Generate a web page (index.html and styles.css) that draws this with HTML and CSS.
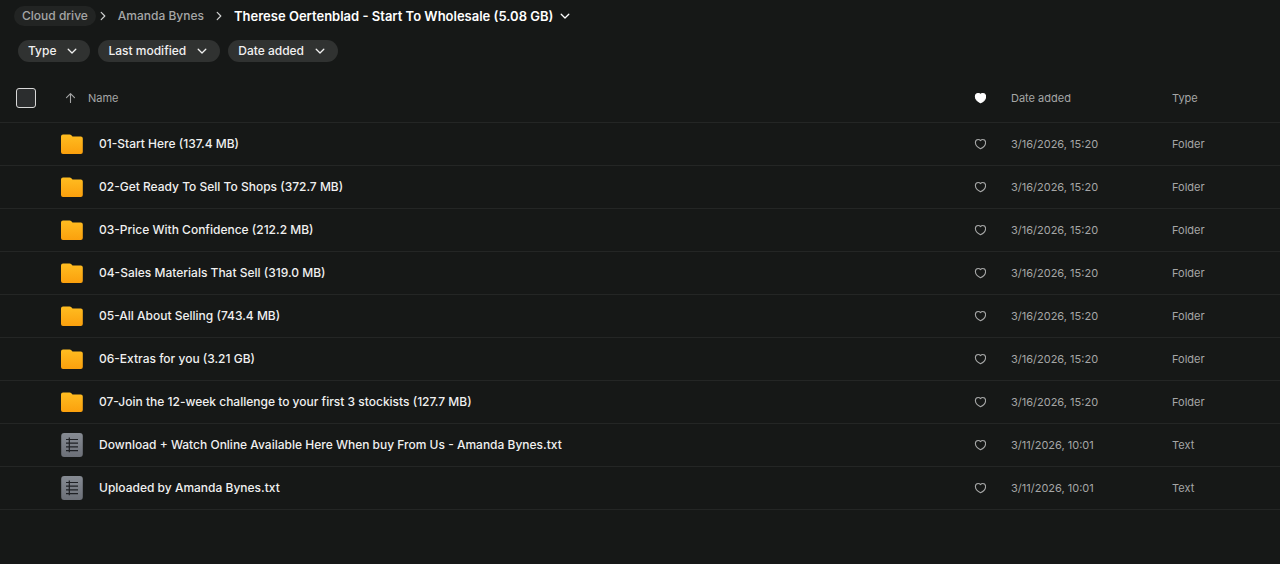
FILE: index.html
```html
<!DOCTYPE html>
<html lang="en">
<head>
    <meta charset="UTF-8">
    <meta name="viewport" content="width=device-width, initial-scale=1.0">
    <title>Cloud drive</title>
    <link rel="stylesheet" href="styles.css">
</head>
<body>
    <svg class="sprite" aria-hidden="true">
        <defs>
            <linearGradient id="folder-fill" x1="0" y1="0" x2="0" y2="1">
                <stop offset="0" stop-color="#ffbd21"/>
                <stop offset="1" stop-color="#fba00d"/>
            </linearGradient>
            <linearGradient id="text-fill" x1="0" y1="0" x2="0" y2="1">
                <stop offset="0" stop-color="#868b93"/>
                <stop offset="1" stop-color="#6c7078"/>
            </linearGradient>
            <symbol id="chevron-down" viewBox="0 0 12 12">
                <path d="M2.2 4.2l3.8 3.8 3.8-3.8" fill="none" stroke="currentColor" stroke-width="1.3" stroke-linecap="round" stroke-linejoin="round"/>
            </symbol>
            <symbol id="chevron-right" viewBox="0 0 12 12">
                <path d="M4.2 2.4l3.6 3.6-3.6 3.6" fill="none" stroke="currentColor" stroke-width="1.2" stroke-linecap="round" stroke-linejoin="round"/>
            </symbol>
            <symbol id="arrow-up" viewBox="0 0 12 12">
                <path d="M6.5 10.5V2M2.5 5.7l4-4 4 4" fill="none" stroke="currentColor" stroke-width="1.1" stroke-linecap="round" stroke-linejoin="round"/>
            </symbol>
            <symbol id="heart" viewBox="0 0 12 12">
                <path d="M6.5 10.8C4.6 9.9 1.4 7.7 1.4 4.6 1.4 2.8 2.5 1.5 4.1 1.5 5.1 1.5 6 1.9 6.5 2.6 7 1.9 7.9 1.5 8.9 1.5 10.5 1.5 11.6 2.8 11.6 4.6 11.6 7.7 8.4 9.9 6.5 10.8Z" stroke="currentColor" stroke-width="1.1" stroke-linejoin="round"/>
            </symbol>
            <symbol id="folder" viewBox="0 0 24 24">
                <path d="M1 4.5A2 2 0 0 1 3 2.5H9.6A2.4 2.4 0 0 1 11.4 3.3L12.2 4.2A1.5 1.5 0 0 0 13.3 4.6H20.8A2 2 0 0 1 22.8 6.6V20A2 2 0 0 1 20.8 22H3A2 2 0 0 1 1 20Z" fill="url(#folder-fill)"/>
            </symbol>
            <symbol id="text-file" viewBox="0 0 24 24">
                <rect x="1.2" y="0" width="21.6" height="24" rx="3" fill="url(#text-fill)"/>
                <path d="M6 6.5H18M6 10.2H18M6 13.9H18M6 17.6H18M9.3 4.6V19.2" fill="none" stroke="#1e2024" stroke-width="1.2"/>
            </symbol>
        </defs>
    </svg>

    <nav class="breadcrumb" aria-label="Breadcrumb">
        <a class="crumb crumb-root" href="#">Cloud drive</a>
        <svg class="icon crumb-sep"><use href="#chevron-right"/></svg>
        <a class="crumb" href="#">Amanda Bynes</a>
        <svg class="icon crumb-sep"><use href="#chevron-right"/></svg>
        <button class="crumb-current" type="button">Therese Oertenblad - Start To Wholesale (5.08 GB)<svg class="icon"><use href="#chevron-down"/></svg></button>
    </nav>

    <div class="filters">
        <button class="filter" type="button">Type<svg class="icon"><use href="#chevron-down"/></svg></button>
        <button class="filter" type="button">Last modified<svg class="icon"><use href="#chevron-down"/></svg></button>
        <button class="filter" type="button">Date added<svg class="icon"><use href="#chevron-down"/></svg></button>
    </div>

    <table class="files">
        <colgroup>
            <col class="col-check">
            <col class="col-name">
            <col class="col-fav">
            <col class="col-date">
            <col class="col-type">
        </colgroup>
        <thead>
            <tr>
                <th><input class="check" type="checkbox" aria-label="Select all"></th>
                <th><button class="sort" type="button"><svg class="icon"><use href="#arrow-up"/></svg>Name</button></th>
                <th><svg class="icon heart heart-on" role="img" aria-label="Favourite"><use href="#heart"/></svg></th>
                <th>Date added</th>
                <th>Type</th>
            </tr>
        </thead>
        <tbody>
            <tr>
                <td></td>
                <td><div class="name"><svg class="file-icon"><use href="#folder"/></svg>01-Start Here (137.4 MB)</div></td>
                <td><button class="fav" type="button" aria-label="Add to favourites"><svg class="icon heart"><use href="#heart"/></svg></button></td>
                <td>3/16/2026, 15:20</td>
                <td>Folder</td>
            </tr>
            <tr>
                <td></td>
                <td><div class="name"><svg class="file-icon"><use href="#folder"/></svg>02-Get Ready To Sell To Shops (372.7 MB)</div></td>
                <td><button class="fav" type="button" aria-label="Add to favourites"><svg class="icon heart"><use href="#heart"/></svg></button></td>
                <td>3/16/2026, 15:20</td>
                <td>Folder</td>
            </tr>
            <tr>
                <td></td>
                <td><div class="name"><svg class="file-icon"><use href="#folder"/></svg>03-Price With Confidence (212.2 MB)</div></td>
                <td><button class="fav" type="button" aria-label="Add to favourites"><svg class="icon heart"><use href="#heart"/></svg></button></td>
                <td>3/16/2026, 15:20</td>
                <td>Folder</td>
            </tr>
            <tr>
                <td></td>
                <td><div class="name"><svg class="file-icon"><use href="#folder"/></svg>04-Sales Materials That Sell (319.0 MB)</div></td>
                <td><button class="fav" type="button" aria-label="Add to favourites"><svg class="icon heart"><use href="#heart"/></svg></button></td>
                <td>3/16/2026, 15:20</td>
                <td>Folder</td>
            </tr>
            <tr>
                <td></td>
                <td><div class="name"><svg class="file-icon"><use href="#folder"/></svg>05-All About Selling (743.4 MB)</div></td>
                <td><button class="fav" type="button" aria-label="Add to favourites"><svg class="icon heart"><use href="#heart"/></svg></button></td>
                <td>3/16/2026, 15:20</td>
                <td>Folder</td>
            </tr>
            <tr>
                <td></td>
                <td><div class="name"><svg class="file-icon"><use href="#folder"/></svg>06-Extras for you (3.21 GB)</div></td>
                <td><button class="fav" type="button" aria-label="Add to favourites"><svg class="icon heart"><use href="#heart"/></svg></button></td>
                <td>3/16/2026, 15:20</td>
                <td>Folder</td>
            </tr>
            <tr>
                <td></td>
                <td><div class="name"><svg class="file-icon"><use href="#folder"/></svg>07-Join the 12-week challenge to your first 3 stockists (127.7 MB)</div></td>
                <td><button class="fav" type="button" aria-label="Add to favourites"><svg class="icon heart"><use href="#heart"/></svg></button></td>
                <td>3/16/2026, 15:20</td>
                <td>Folder</td>
            </tr>
            <tr>
                <td></td>
                <td><div class="name"><svg class="file-icon"><use href="#text-file"/></svg>Download + Watch Online Available Here When buy From Us - Amanda Bynes.txt</div></td>
                <td><button class="fav" type="button" aria-label="Add to favourites"><svg class="icon heart"><use href="#heart"/></svg></button></td>
                <td>3/11/2026, 10:01</td>
                <td>Text</td>
            </tr>
            <tr>
                <td></td>
                <td><div class="name"><svg class="file-icon"><use href="#text-file"/></svg>Uploaded by Amanda Bynes.txt</div></td>
                <td><button class="fav" type="button" aria-label="Add to favourites"><svg class="icon heart"><use href="#heart"/></svg></button></td>
                <td>3/11/2026, 10:01</td>
                <td>Text</td>
            </tr>
        </tbody>
    </table>
</body>
</html>
```
FILE: styles.css
```css
* {
    margin: 0;
    padding: 0;
    box-sizing: border-box;
}
body {
    min-height: 100vh;
    background: #161817;
    color: #f0f0f0;
    font: 500 12px/20px Inter, "Liberation Sans", sans-serif;
}
button {
    border: 0;
    background: none;
    color: inherit;
    font: inherit;
    cursor: pointer;
}
.sprite {
    display: block;
    width: 0;
    height: 0;
}
.icon {
    flex: none;
    display: block;
    width: 12px;
    height: 12px;
    overflow: visible;
}

/* breadcrumb */
.breadcrumb {
    display: flex;
    align-items: center;
    padding: 6px 14px 0;
}
.crumb {
    padding: 0 8px;
    border-radius: 10px;
    color: #a5a6a6;
    text-decoration: none;
}
.crumb-root {
    background: #222423;
}
.crumb-sep {
    margin: 0 1px;
    color: #d0d1d1;
}
.crumb-current {
    display: flex;
    align-items: center;
    gap: 6px;
    padding: 0 8px;
    color: #fff;
    font-size: 13px;
    font-weight: 600;
}

/* filters */
.filters {
    display: flex;
    gap: 8px;
    padding: 14px 18px 12px;
}
.filter {
    display: flex;
    align-items: center;
    gap: 10px;
    height: 22px;
    padding: 0 12px 0 10px;
    border-radius: 11px;
    background: #303231;
}

/* file list */
.files {
    width: 100%;
    table-layout: fixed;
    border-collapse: separate;
    border-spacing: 0;
    color: #a5a6a6;
    font-size: 11px;
}
.col-check {
    width: 60px;
}
.col-fav {
    width: 37px;
}
.col-date {
    width: 161px;
}
.col-type {
    width: 108px;
}
.files th,
.files td {
    height: 43px;
    border-bottom: 1px solid #242625;
    font-weight: 400;
    text-align: left;
    vertical-align: middle;
    white-space: nowrap;
}
.files th {
    height: 49px;
}
.check {
    display: block;
    width: 20px;
    height: 20px;
    margin-left: 16px;
    appearance: none;
    border: 1px solid #d8d8d8;
    border-radius: 3px;
    background: #2b2d2e;
}
.check:checked {
    background: #f0f0f0;
}
.sort {
    display: flex;
    align-items: center;
    gap: 12px;
    padding-left: 4px;
}
.name {
    display: flex;
    align-items: center;
    gap: 15px;
    color: #f0f0f0;
    font-size: 12px;
    font-weight: 500;
}
.file-icon {
    flex: none;
    width: 24px;
    height: 24px;
}
.fav {
    display: block;
}
.heart {
    fill: none;
    color: #a5a6a6;
}
.heart-on {
    fill: #fff;
    color: #fff;
}
```
